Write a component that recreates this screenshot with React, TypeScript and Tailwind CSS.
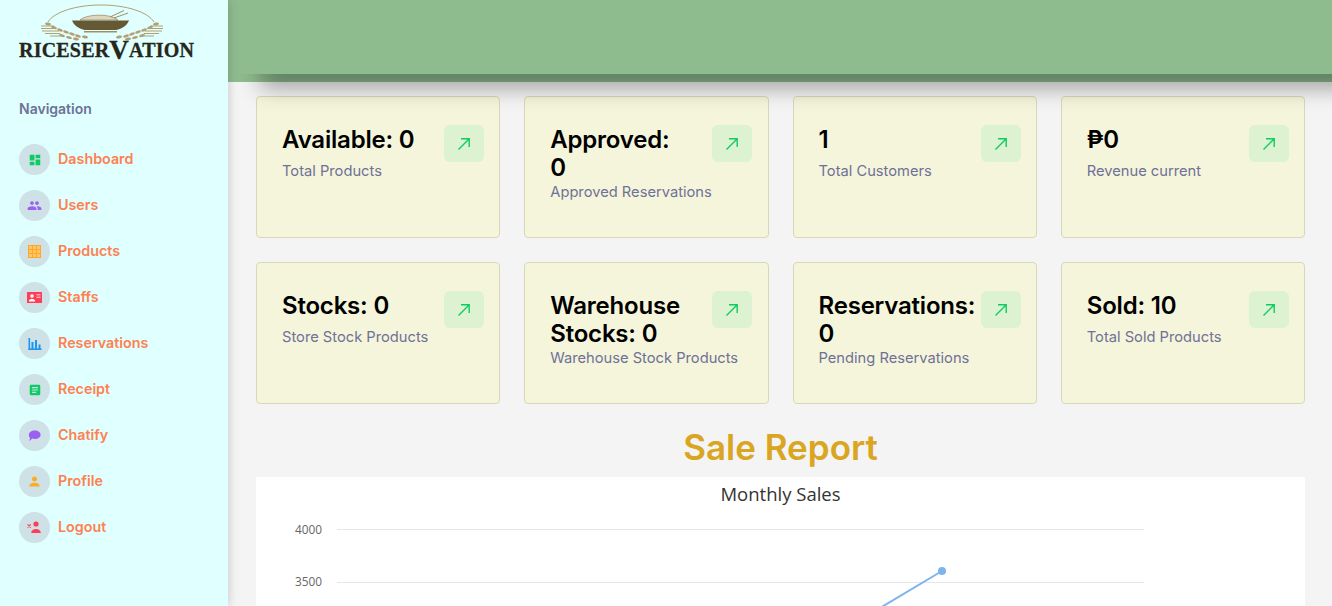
import { MdDashboard, MdPeople, MdPerson, MdArticle } from "react-icons/md";
import { ReactNode } from "react";

const rubik = "font-['Inter','Noto_Sans',sans-serif]";

function Grid() {
  return (
    <svg width="13" height="13" viewBox="0 0 13 13">
      <rect width="13" height="13" fill="#ffa726" />
      <path d="M1 1h3v3H1zM5 1h3v3H5zM9 1h3v3H9zM1 5h3v3H1zM5 5h3v3H5zM9 5h3v3H9zM1 9h3v3H1zM5 9h3v3H5zM9 9h3v3H9z" fill="#ffc56b" />
    </svg>
  );
}

function Staff() {
  return (
    <svg width="15" height="11" viewBox="0 0 15 11">
      <rect width="15" height="11" rx="0.5" fill="#ff3d57" />
      <circle cx="5" cy="4" r="1.8" fill="#fff" />
      <path d="M1.8 9.6c0-2 2-2.8 3.2-2.8s3.2.8 3.2 2.8z" fill="#fff" />
      <rect x="9.5" y="2" width="4" height="1.4" fill="#ffb0ba" />
      <rect x="9.5" y="4.6" width="4" height="1.4" fill="#ffb0ba" />
    </svg>
  );
}

function Bars() {
  return (
    <svg width="14" height="14" viewBox="0 0 14 14" fill="#1e96f0">
      <rect x="0.5" y="1" width="1.6" height="12" />
      <rect x="0.5" y="11.4" width="13" height="1.6" />
      <rect x="3.5" y="5" width="2" height="7" />
      <rect x="7" y="3" width="2" height="9" />
      <rect x="10.5" y="7.5" width="2" height="4.5" />
    </svg>
  );
}

function Bubble() {
  return (
    <svg width="13" height="12" viewBox="0 0 13 12">
      <path d="M6.8 0.5C10 0.5 12.6 2.3 12.6 4.8S10 9 6.8 9c-.9 0-1.7-.1-2.4-.4L1.4 11 2 7.9C1.2 7 .9 6 .9 4.8.9 2.3 3.5.5 6.8.5z" fill="#9c5ff0" />
    </svg>
  );
}

function PersonX() {
  return (
    <svg width="15" height="13" viewBox="0 0 15 13" fill="#ff3d57">
      <circle cx="9" cy="3" r="2.6" />
      <path d="M4.2 12c0-2.800 2.800-4 4.800-4s4.800 1.200 4.800 4z" />
      <path d="M0.600 3.400l3.200 3.200m0-3.200l-3.200 3.200" stroke="#ff3d57" strokeWidth="1.100" fill="none" />
    </svg>
  );
}

const navItems: { label: string; icon: ReactNode }[] = [
  { label: "Dashboard", icon: <MdDashboard size={14} color="#0ecb62" /> },
  { label: "Users", icon: <MdPeople size={15} color="#9c5ff0" /> },
  { label: "Products", icon: <Grid /> },
  { label: "Staffs", icon: <Staff /> },
  { label: "Reservations", icon: <Bars /> },
  { label: "Receipt", icon: <MdArticle size={14} color="#0ecb62" /> },
  { label: "Chatify", icon: <Bubble /> },
  { label: "Profile", icon: <MdPerson size={15} color="#ffaa22" /> },
  { label: "Logout", icon: <PersonX /> },
];

const cards = [
  { title: "Available: 0", sub: "Total Products" },
  { title: "Approved:\n0", sub: "Approved Reservations" },
  { title: "1", sub: "Total Customers" },
  { title: "₱0", sub: "Revenue current" },
  { title: "Stocks: 0", sub: "Store Stock Products" },
  { title: "Warehouse\nStocks: 0", sub: "Warehouse Stock Products" },
  { title: "Reservations:\n0", sub: "Pending Reservations" },
  { title: "Sold: 10", sub: "Total Sold Products" },
];

// left half of the wreath, mirrored round x=102
const grains = [
  [48, 24, 10], [54, 27.5, 18], [60, 30, 20], [66, 32, 20], [72, 34, 18], [78, 36, 16], [85, 37, 10],
  [62, 35.5, 18], [69, 37.5, 14], [76, 39, 10],
];

function Logo() {
  return (
    <div className="h-[64px] pl-[19px] relative">
      <svg width="176" height="44" viewBox="19 0 176 44" className="block">
        <path d="M48 22C54 12 76 5 101 5s47 7 53 17" fill="none" stroke="#b39f70" strokeWidth="1" />
        {grains.map(([x, y, r], i) => (
          <g key={i} fill="#b39f70">
            <ellipse cx={x} cy={y} rx="3" ry="1.4" transform={`rotate(${r} ${x} ${y})`} />
            <ellipse cx={204 - x} cy={y} rx="3" ry="1.4" transform={`rotate(${-r} ${204 - x} ${y})`} />
          </g>
        ))}
        <path d="M41 26h13M41 28.5h15M42 31h17M45 33.5h15M50 36h14M163 26h-13M163 28.5h-15M162 31h-17M159 33.5h-15M154 36h-14" stroke="#b39f70" strokeWidth="1.2" />
        <path d="M80 20c6-6 30-7 38 0z" fill="#dcd8c0" stroke="#8a7a50" strokeWidth="0.6" />
        <path d="M110 17l14-6.5M114 18l14-5" stroke="#a08f60" strokeWidth="1" />
        <path d="M72 20.5h57c-2 5-7 8.5-13 9.5H85c-6-1-11-4.500-13-9.500z" fill="#655834" />
        <rect x="84" y="31" width="33" height="1.500" fill="#a08f60" />
      </svg>
      <div className="absolute left-[19px] top-[39px] flex items-end font-['Liberation_Serif',serif] font-bold text-[#26261a] text-[20px] leading-[22px] [-webkit-text-stroke:0.3px_#26261a] tracking-[0.2px]">
        RICESER<span className="text-[27px] leading-[22px]">V</span>ATION
      </div>
    </div>
  );
}

function Sidebar() {
  return (
    <aside className={`w-[228px] shrink-0 h-full bg-[#e0ffff] shadow-[0_0_10px_rgba(0,0,0,0.2)] z-20 ${rubik}`}>
      <Logo />
      <div className="pl-[19px] pt-[35px] text-[14px] leading-[20px] font-semibold text-[#6f7196]">Navigation</div>
      <nav className="flex flex-col gap-[15px] pl-[19px] pt-[25px]">
        {navItems.map((item) => (
          <div key={item.label} className="flex items-center gap-[8px] h-[31px]">
            <span className="w-[31px] h-[31px] rounded-full bg-[#cde1e6] flex items-center justify-center">{item.icon}</span>
            <span className="text-[14.3px] font-semibold text-[#ff7f50] -mt-[2px]">{item.label}</span>
          </div>
        ))}
      </nav>
    </aside>
  );
}

function StatCard({ title, sub }: { title: string; sub: string }) {
  return (
    <div className="h-[142px] bg-[#f5f5dc] border border-[#d8d8b8] rounded-[4px] pl-[25px] pr-[15.2px] pt-[28px] flex items-start">
      <div className="flex-1 min-w-0 pt-[1px]">
        <div className="text-[24px] leading-[28px] font-semibold text-black whitespace-pre-line min-h-[35px] -mb-[1px] tracking-[-0.2px]">{title}</div>
        <div className="text-[14.7px] leading-[22px] text-[#6f7196] whitespace-nowrap">{sub}</div>
      </div>
      <div className="w-[40px] h-[37px] shrink-0 rounded-[6px] bg-[#dcf2d0] flex items-center justify-center">
        <svg width="16" height="16" viewBox="0 0 16 16" fill="none" stroke="#0ecb62" strokeWidth="1.4">
          <path d="M2.500 13.500L13 3M5 2.800h8.200V11" />
        </svg>
      </div>
    </div>
  );
}

function Chart() {
  return (
    <svg width="1049" height="100" viewBox="0 0 1049 100" className="block">
      <line x1="81" x2="888" y1="23.5" y2="23.5" stroke="#e6e6e6" />
      <line x1="81" x2="888" y1="76.5" y2="76.5" stroke="#e6e6e6" />
      <text x="66" y="28" textAnchor="end" fontSize="11.800" fill="#666" fontFamily="'Open Sans', sans-serif">4000</text>
      <text x="66" y="80" textAnchor="end" fontSize="11.800" fill="#666" fontFamily="'Open Sans', sans-serif">3500</text>
      <path d="M624 102L686 65" stroke="#7cb5ec" strokeWidth="2" fill="none" />
      <circle cx="686" cy="65" r="4" fill="#7cb5ec" />
    </svg>
  );
}

export default function App() {
  return (
    <div className="w-[1332px] h-[606px] flex overflow-hidden bg-[#f4f4f4]">
      <Sidebar />
      <main className={`flex-1 min-w-0 flex flex-col relative ${rubik}`}>
        <header className="h-[82px] shrink-0 bg-[#8fbc8f]" />
        {/* header shadow, cut off sharply at its top edge */}
        <div className="absolute left-0 right-0 top-[74px] h-[40px] overflow-hidden z-10 pointer-events-none">
          <div className="absolute left-[32px] right-[-40px] top-[-30px] h-[30px] shadow-[0_14px_22px_rgba(0,0,0,0.34)]" />
        </div>
        <div className="pl-[28px] pr-[27px] pt-[14px]">
          <div className="grid grid-cols-4 gap-x-[24px] gap-y-[24px]">
            {cards.map((c) => (
              <StatCard key={c.sub} title={c.title} sub={c.sub} />
            ))}
          </div>
          <h2 className="mt-[23px] text-center text-[35px] leading-[40px] font-semibold text-[#daa520]">Sale Report</h2>
          <div className="bg-white mt-[10px]">
            <div className="text-center text-[18.500px] leading-[24px] pt-[5px] text-[#333] font-['Open_Sans',sans-serif]">Monthly Sales</div>
            <Chart />
          </div>
        </div>
      </main>
    </div>
  );
}
